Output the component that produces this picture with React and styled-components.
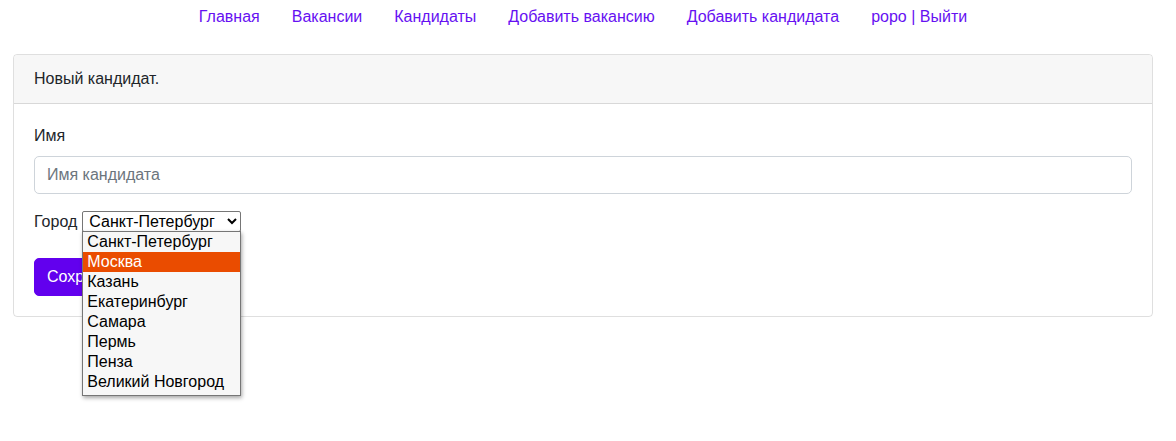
import styled, { createGlobalStyle } from "styled-components";
import React from "react";

const GlobalStyle = createGlobalStyle`
    body {
        margin: 0;
        font-family: "Liberation Sans", Arial, sans-serif;
        font-size: 16px;
        line-height: 1.5;
        color: #212529;
        background: #fff;
    }
`;

const links = ["Главная", "Вакансии", "Кандидаты", "Добавить вакансию", "Добавить кандидата", "роро | Выйти"];
const cities = ["Санкт-Петербург", "Москва", "Казань", "Екатеринбург", "Самара", "Пермь", "Пенза", "Великий Новгород"];

export default function App() {
    return (
        <Page>
            <GlobalStyle />
            <Nav>
                {links.map((l) => (
                    <NavLink key={l} href="#">{l}</NavLink>
                ))}
            </Nav>
            <Card>
                <CardHeader>Новый кандидат.</CardHeader>
                <CardBody>
                    <Group>
                        <Label>Имя</Label>
                        <Input type="text" placeholder="Имя кандидата" />
                    </Group>
                    <CityRow>
                        <CityLabel>Город</CityLabel>
                        <SelectWrap>
                            <Select defaultValue={cities[0]}>
                                {cities.map((c) => (
                                    <option key={c}>{c}</option>
                                ))}
                            </Select>
                            {/* открытый список городов */}
                            <Options>
                                {cities.map((c, i) => (
                                    <Option key={c} $active={i === 1}>{c}</Option>
                                ))}
                            </Options>
                        </SelectWrap>
                    </CityRow>
                    <Button>Сохранить</Button>
                </CardBody>
            </Card>
        </Page>
    );
}

const Page = styled.div`
    width: 1166px;
    min-height: 441px;
`;

const Nav = styled.nav`
    display: flex;
    justify-content: center;
    padding: 5px 0 0;
    height: 35px;
`;

const NavLink = styled.a`
    padding: 0 16px;
    color: #6610f2;
    text-decoration: none;
    font-size: 16px;
    line-height: 24px;
`;

const Card = styled.div`
    margin: 14px 13px 0;
    border: 1px solid rgba(0, 0, 0, 0.125);
    border-radius: 4px;
`;

const CardHeader = styled.div`
    padding: 12px 20px;
    background: #f7f7f7;
    border-bottom: 1px solid rgba(0, 0, 0, 0.125);
    border-radius: 4px 4px 0 0;
`;

const CardBody = styled.div`
    padding: 20px;
`;

const Group = styled.div`
    margin-bottom: 17px;
`;

const Label = styled.label`
    display: block;
    margin-bottom: 8px;
`;

const Input = styled.input`
    display: block;
    box-sizing: border-box;
    width: 100%;
    height: 38px;
    padding: 6px 12px;
    font-family: inherit;
    font-size: 16px;
    color: #212529;
    border: 1px solid #ced4da;
    border-radius: 5px;
    &::placeholder {
        color: #6c757d;
    }
`;

const CityRow = styled.div`
    display: flex;
    align-items: center;
    height: 21px;
    margin-bottom: 26px;
`;

const CityLabel = styled.label`
    margin-right: 5px;
`;

const SelectWrap = styled.div`
    position: relative;
`;

const Select = styled.select`
    width: 159px;
    height: 21px;
    font-family: "Liberation Sans", Arial, sans-serif;
    font-size: 16px;
    color: #000;
    padding: 0 0 0 2px;
    border: 1px solid #767676;
    border-radius: 2px;
    background: #fff;
`;

const Options = styled.div`
    position: absolute;
    left: 0;
    top: 21px;
    width: 157px;
    border: 1px solid #767676;
    background: #f7f7f7;
    box-shadow: 1px 2px 4px rgba(0, 0, 0, 0.35);
    padding: 0 0 3px;
    z-index: 2;
`;

const Option = styled.div`
    padding: 0 4px;
    font-size: 16px;
    line-height: 20px;
    color: ${(p) => (p.$active ? "#fff" : "#000")};
    background: ${(p) => (p.$active ? "#ea4c00" : "transparent")};
`;

const Button = styled.button`
    display: inline-block;
    height: 38px;
    padding: 6px 12px;
    font-family: inherit;
    font-size: 16px;
    color: #fff;
    background: #6200ee;
    border: 1px solid #6200ee;
    border-radius: 5px;
`;
